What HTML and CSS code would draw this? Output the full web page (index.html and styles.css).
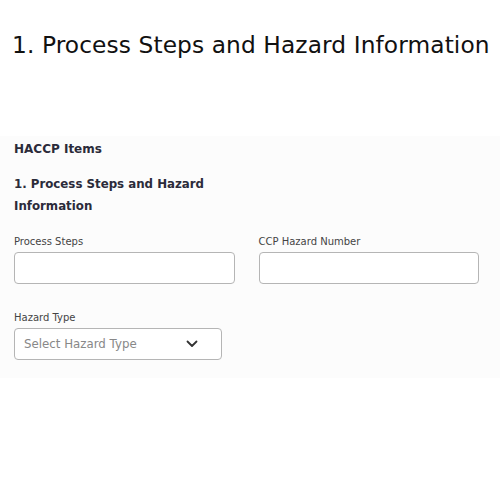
FILE: index.html
```html
<!DOCTYPE html>
<html lang="en">
<head>
  <meta charset="UTF-8">
  <meta name="viewport" content="width=device-width, initial-scale=1.0">
  <title>HACCP Items</title>
  <link rel="stylesheet" href="styles.css">
</head>
<body>

<h1 class="page-title">1. Process Steps and Hazard Information</h1>

<div class="panel">
  <div class="panel-title">HACCP Items</div>
  <div class="section-title">1. Process Steps and Hazard<br>Information</div>

  <div class="field-row">
    <div class="field">
      <label>Process Steps</label>
      <input type="text" class="input">
    </div>
    <div class="field">
      <label>CCP Hazard Number</label>
      <input type="text" class="input">
    </div>
  </div>

  <div class="field field-select">
    <label>Hazard Type</label>
    <div class="select">
      <span>Select Hazard Type</span>
      <svg width="12" height="8" viewBox="0 0 12 8"><path d="M1.5 1.5 L6 6 L10.5 1.5" fill="none" stroke="#333" stroke-width="1.8" stroke-linecap="round" stroke-linejoin="round"/></svg>
    </div>
  </div>
</div>

</body>
</html>
```

FILE: styles.css
```css
body { margin: 0; font-family: "DejaVu Sans", sans-serif; background: white; color: #222; }
.page-title { margin: 0; padding: 29px 0 0 12px; font-size: 23.3px; font-weight: normal; line-height: 32px; color: #111; letter-spacing: 0.1px; }
.panel { margin-top: 75px; background: #fcfcfc; padding: 4px 21px 18px 14px; }
.panel-title { font-size: 12px; font-weight: bold; color: #2b2b3a; line-height: 18px; }
.section-title { margin-top: 15px; font-size: 11.8px; font-weight: bold; color: #2b2b3a; line-height: 22px; }
.field-row { display: grid; grid-template-columns: 1fr 1fr; gap: 24px; margin-top: 18px; }
.field label { display: block; font-size: 10px; color: #444; line-height: 14px; margin-bottom: 3px; }
.input { display: block; box-sizing: border-box; width: 100%; height: 32px; border: 1px solid #b5b5b5; border-radius: 4px; background: white; margin: 0; }
.field-select { margin-top: 27px; width: 208px; }
.select { box-sizing: border-box; height: 32px; border: 1px solid #b5b5b5; border-radius: 4px; background: white; display: flex; align-items: center; justify-content: space-between; padding: 0 23px 0 9px; font-size: 11.8px; color: #888; }
```
